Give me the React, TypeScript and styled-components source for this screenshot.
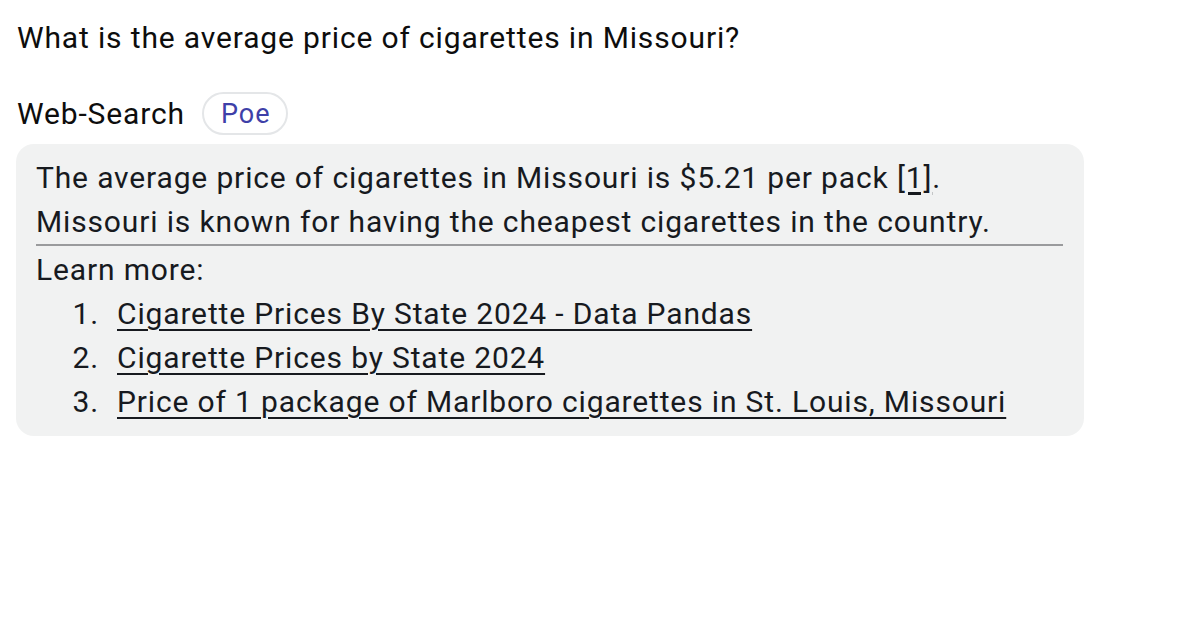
import React from 'react'
import styled, { createGlobalStyle } from 'styled-components'

const GlobalStyle = createGlobalStyle`
  body {
    margin: 0;
    background: #ffffff;
    font-family: Roboto, "Noto Sans", sans-serif;
    color: #111111;
  }
`

const Page = styled.div`
  display: flex;
  flex-direction: column;
  align-items: flex-start;
  padding: 16px 16px 0 17px;
  width: 1200px;
  box-sizing: border-box;
`

const Question = styled.div`
  font-size: 30px;
  letter-spacing: 0.85px;
  line-height: 44px;
  color: #0d0d0d;
`

const BotRow = styled.div`
  display: flex;
  align-items: center;
  gap: 17px;
  margin-top: 32px;
`

const BotName = styled.span`
  font-size: 30px;
  letter-spacing: 0.85px;
  color: #0d0d0d;
`

const Badge = styled.span`
  display: inline-flex;
  align-items: center;
  height: 43px;
  padding: 0 16px 0 17px;
  border: 2px solid #e4e6e8;
  border-radius: 22px;
  box-sizing: border-box;
  font-size: 27px;
  letter-spacing: 1px;
  color: #3e40a8;
`

const Bubble = styled.div`
  margin-top: 9px;
  margin-left: -1px;
  width: 1068px;
  box-sizing: border-box;
  background: #f1f2f2;
  border-radius: 18px;
  padding: 12px 21px 12px 20px;
  font-size: 30px;
  letter-spacing: 0.85px;
  line-height: 44px;
  color: #171a1f;
`

const Para = styled.p`
  margin: 0;
`

const Cite = styled.a`
  color: inherit;
  text-decoration: underline;
  text-underline-offset: 4px;
`

const Rule = styled.hr`
  border: none;
  border-top: 2px solid #9a9b9d;
  margin: 0 0 2px;
`

const Sources = styled.ol`
  margin: 0;
  padding: 0;
  list-style: none;
  counter-reset: src;
`

const Source = styled.li`
  display: flex;
  counter-increment: src;

  &::before {
    content: counter(src) ".";
    width: 63px;
    margin-right: 18px;
    text-align: right;
    flex-shrink: 0;
  }
`

const SourceLink = styled.a`
  color: inherit;
  text-decoration: underline;
  text-underline-offset: 5px;
  text-decoration-thickness: 2px;
`

const sources = [
  'Cigarette Prices By State 2024 - Data Pandas',
  'Cigarette Prices by State 2024',
  'Price of 1 package of Marlboro cigarettes in St. Louis, Missouri',
]

export default function App() {
  return (
    <>
      <GlobalStyle />
      <Page>
        <Question>What is the average price of cigarettes in Missouri?</Question>
        <BotRow>
          <BotName>Web-Search</BotName>
          <Badge>Poe</Badge>
        </BotRow>
        <Bubble>
          <Para>
            The average price of cigarettes in Missouri is $5.21 per pack <Cite href="#">[1]</Cite>.
            <br />
            Missouri is known for having the cheapest cigarettes in the country.
          </Para>
          <Rule />
          <Para>Learn more:</Para>
          <Sources>
            {sources.map((s) => (
              <Source key={s}>
                <SourceLink href="#">{s}</SourceLink>
              </Source>
            ))}
          </Sources>
        </Bubble>
      </Page>
    </>
  )
}
